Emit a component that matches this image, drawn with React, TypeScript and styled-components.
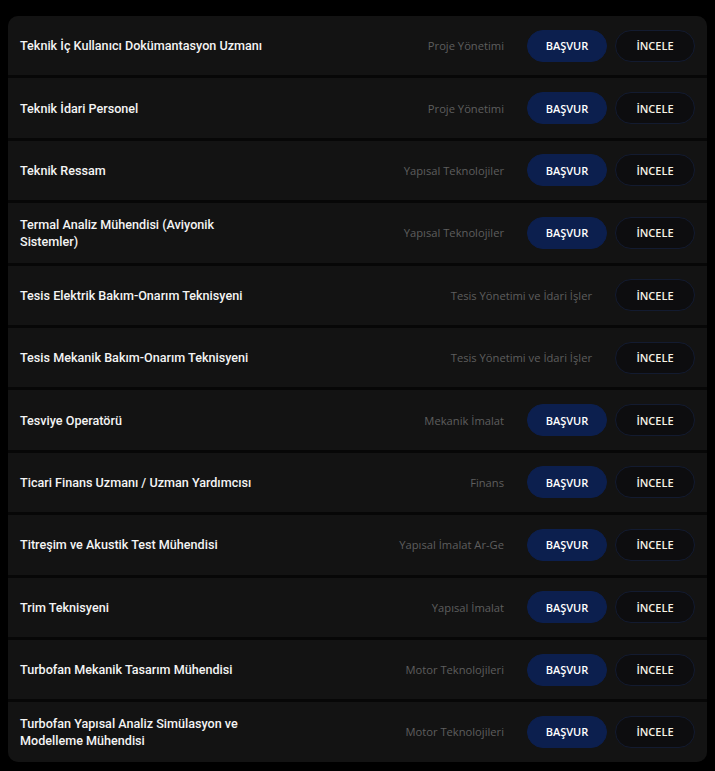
import React from 'react';
import styled, { createGlobalStyle } from 'styled-components';

type Job = {
    title: string;
    department: string;
    canApply: boolean;
};

const jobs: Job[] = [
    { title: 'Teknik İç Kullanıcı Dokümantasyon Uzmanı', department: 'Proje Yönetimi', canApply: true },
    { title: 'Teknik İdari Personel', department: 'Proje Yönetimi', canApply: true },
    { title: 'Teknik Ressam', department: 'Yapısal Teknolojiler', canApply: true },
    { title: 'Termal Analiz Mühendisi (Aviyonik Sistemler)', department: 'Yapısal Teknolojiler', canApply: true },
    { title: 'Tesis Elektrik Bakım-Onarım Teknisyeni', department: 'Tesis Yönetimi ve İdari İşler', canApply: false },
    { title: 'Tesis Mekanik Bakım-Onarım Teknisyeni', department: 'Tesis Yönetimi ve İdari İşler', canApply: false },
    { title: 'Tesviye Operatörü', department: 'Mekanik İmalat', canApply: true },
    { title: 'Ticari Finans Uzmanı / Uzman Yardımcısı', department: 'Finans', canApply: true },
    { title: 'Titreşim ve Akustik Test Mühendisi', department: 'Yapısal İmalat Ar-Ge', canApply: true },
    { title: 'Trim Teknisyeni', department: 'Yapısal İmalat', canApply: true },
    { title: 'Turbofan Mekanik Tasarım Mühendisi', department: 'Motor Teknolojileri', canApply: true },
    { title: 'Turbofan Yapısal Analiz Simülasyon ve Modelleme Mühendisi', department: 'Motor Teknolojileri', canApply: true },
];

const GlobalStyle = createGlobalStyle`
    body {
        margin: 0;
        background: #000;
        font-family: Roboto, "Liberation Sans", sans-serif;
    }
`;

export default function App() {
    return (
        <>
            <GlobalStyle />
            <Page>
                <List>
                    {jobs.map((job) => (
                        <Row key={job.title}>
                            <Title>{job.title}</Title>
                            <Department>{job.department}</Department>
                            <Actions>
                                {job.canApply && <Button variant='filled'>BAŞVUR</Button>}
                                <Button variant='outline'>İNCELE</Button>
                            </Actions>
                        </Row>
                    ))}
                </List>
            </Page>
        </>
    );
}

const Page = styled.main`
    padding: 16px 8px 10px 8px;
`;

const List = styled.ul`
    list-style: none;
    margin: 0;
    padding: 0;
    width: 699px;
    display: flex;
    flex-direction: column;
    gap: 3px;
    border-radius: 10px;
    overflow: hidden;
    background: #070707;
`;

const Row = styled.li`
    display: flex;
    align-items: center;
    height: 59.4px;
    padding: 0 12px;
    background: #131313;
`;

const Title = styled.h3`
    margin: 0;
    width: 250px;
    font-size: 12.6px;
    font-weight: 500;
    line-height: 17px;
    color: #f4f4f4;
`;

const Department = styled.span`
    margin-left: auto;
    margin-right: 23px;
    font-family: "Open Sans", sans-serif;
    font-size: 11.2px;
    color: #5e5e5e;
`;

const Actions = styled.div`
    display: flex;
    gap: 8px;
`;

const Button = styled.button<{ variant: 'filled' | 'outline' }>`
    width: 80px;
    height: 32px;
    border-radius: 16px;
    font-family: "Open Sans", sans-serif;
    font-size: 11px;
    font-weight: 600;
    cursor: pointer;
    color: ${({ variant }) => (variant === 'filled' ? '#ffffff' : '#f6f3e6')};
    background: ${({ variant }) => (variant === 'filled' ? '#0c1f4e' : '#0d0d0f')};
    border: 1px solid ${({ variant }) => (variant === 'filled' ? '#0c1f4e' : '#131b30')};
`;
